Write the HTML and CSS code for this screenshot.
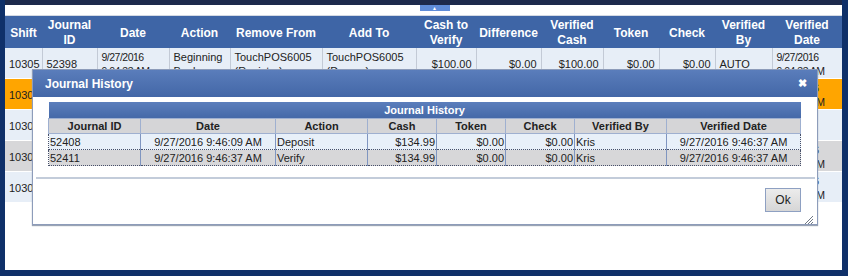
FILE: index.html
```html
<!DOCTYPE html>
<html lang="en">
<head>
  <meta charset="UTF-8">
  <title>Journal Verification</title>
  <link rel="stylesheet" href="styles.css">
</head>
<body>
  <div class="screen">
    <div class="topbar"></div>
    <div class="content">
      <div class="tabstrip"><span class="tab">&#9650;</span></div>
      <table class="grid">
        <colgroup>
          <col style="width:37px"><col style="width:55px"><col style="width:72px"><col style="width:61px">
          <col style="width:92px"><col style="width:94px"><col style="width:60px"><col style="width:65px">
          <col style="width:62px"><col style="width:56px"><col style="width:56px"><col style="width:57px">
          <col style="width:70px">
        </colgroup>
        <thead>
          <tr>
            <th>Shift</th>
            <th>Journal<br>ID</th>
            <th>Date</th>
            <th>Action</th>
            <th>Remove From</th>
            <th>Add To</th>
            <th>Cash to<br>Verify</th>
            <th>Difference</th>
            <th>Verified<br>Cash</th>
            <th>Token</th>
            <th>Check</th>
            <th>Verified<br>By</th>
            <th>Verified<br>Date</th>
          </tr>
        </thead>
        <tbody>
          <tr class="row-light">
            <td>10305</td><td class="left">52398</td><td class="left date">9/27/2016<br>9:04:33 AM</td>
            <td class="left">Beginning<br>Bank</td><td class="left">TouchPOS6005<br>(Register)</td><td class="left">TouchPOS6005<br>(Drawer)</td>
            <td class="num">$100.00</td><td class="num">$0.00</td><td class="num">$100.00</td>
            <td class="num">$0.00</td><td class="num">$0.00</td><td class="left">AUTO</td><td class="left date">9/27/2016<br>9:04:33 AM</td>
          </tr>
          <tr class="row-selected">
            <td>10305</td><td></td><td></td><td></td><td></td><td></td><td></td>
            <td></td><td></td><td></td><td></td><td></td><td class="left date">9/27/2016<br>9:46:37 AM</td>
          </tr>
          <tr class="row-light">
            <td>10305</td><td></td><td></td><td></td><td></td><td></td><td></td>
            <td></td><td></td><td></td><td></td><td></td><td class="left date"></td>
          </tr>
          <tr class="row-gray">
            <td>10305</td><td></td><td></td><td></td><td></td><td></td><td></td>
            <td></td><td></td><td></td><td></td><td></td><td class="left date">9/27/2016<br>9:46:37 AM</td>
          </tr>
          <tr class="row-light">
            <td>10305</td><td></td><td></td><td></td><td></td><td></td><td></td>
            <td></td><td></td><td></td><td></td><td></td><td class="left date">9/27/2016<br>9:46:37 AM</td>
          </tr>
        </tbody>
      </table>
    </div>

    <div class="dialog">
      <div class="dialog-title">
        <span>Journal History</span>
        <span class="dialog-close">&#10006;</span>
      </div>
      <div class="dialog-body">
        <table class="history">
          <colgroup>
            <col style="width:92px"><col style="width:135px"><col style="width:92px"><col style="width:69px">
            <col style="width:69px"><col style="width:69px"><col style="width:92px"><col style="width:134px">
          </colgroup>
          <thead>
            <tr><th colspan="8" class="history-caption">Journal History</th></tr>
            <tr class="history-head">
              <th>Journal ID</th><th>Date</th><th>Action</th><th>Cash</th>
              <th>Token</th><th>Check</th><th>Verified By</th><th>Verified Date</th>
            </tr>
          </thead>
          <tbody>
            <tr class="h-light">
              <td>52408</td><td class="center">9/27/2016 9:46:09 AM</td><td>Deposit</td><td class="num">$134.99</td>
              <td class="num">$0.00</td><td class="num">$0.00</td><td>Kris</td><td class="center">9/27/2016 9:46:37 AM</td>
            </tr>
            <tr class="h-gray">
              <td>52411</td><td class="center">9/27/2016 9:46:37 AM</td><td>Verify</td><td class="num">$134.99</td>
              <td class="num">$0.00</td><td class="num">$0.00</td><td>Kris</td><td class="center">9/27/2016 9:46:37 AM</td>
            </tr>
          </tbody>
        </table>
        <div class="dialog-sep"></div>
        <div class="dialog-buttons">
          <button class="btn-ok">Ok</button>
        </div>
        <svg class="grip" width="10" height="10" viewBox="0 0 10 10">
          <path d="M9 1 L1 9 M9 4 L4 9 M9 7 L7 9" stroke="#6f7784" stroke-width="1"/>
        </svg>
      </div>
    </div>
  </div>
</body>
</html>
```

FILE: styles.css
```css
body {
  margin: 0;
  font-family: "Liberation Sans", Arial, sans-serif;
  background: #ffffff;
}
.screen {
  position: relative;
  width: 848px;
  height: 276px;
  box-sizing: border-box;
  border-left: 5px solid #0f3069;
  border-right: 6px solid #0f3069;
  border-bottom: 6px solid #0f3069;
  background: #ffffff;
  overflow: hidden;
}
.topbar {
  height: 5px;
  background: #1d2a4c;
}
.tabstrip {
  height: 10px;
  border-bottom: 1px solid #d4dae4;
  display: flex;
  justify-content: center;
  padding-left: 22px;
}
.tab {
  width: 30px;
  height: 6px;
  background: #5f8cd8;
  color: #ffffff;
  font-size: 5px;
  line-height: 6px;
  text-align: center;
}
.grid {
  width: 837px;
  table-layout: fixed;
  border-collapse: collapse;
  font-size: 11px;
  color: #222;
}
.grid th {
  height: 30px;
  padding: 2px 0 0;
  background: #3e65a6;
  color: #ffffff;
  font-size: 12px;
  line-height: 15px;
  font-weight: bold;
  text-align: center;
}
.grid td {
  height: 28px;
  padding: 2px 4px 0;
  line-height: 14px;
  border-right: 1px solid #c3cad6;
  border-bottom: 1px solid #ffffff;
  text-align: center;
  white-space: nowrap;
  overflow: hidden;
}
.grid td.left {
  text-align: left;
}
.grid td.num {
  text-align: right;
}
.grid td.date {
  font-size: 10.5px;
  letter-spacing: -0.5px;
}
.row-light td {
  background: #e7eef7;
}
.row-selected td {
  background: #ffa500;
}
.row-gray td {
  background: #d7d7d9;
}

.dialog {
  position: absolute;
  left: 27px;
  top: 69px;
  width: 786px;
  height: 156px;
  box-sizing: border-box;
  background: #ffffff;
  border: 1px solid #8d9cba;
  box-shadow: 0 1px 1px #9aa4b4;
}
.dialog-title {
  height: 27px;
  display: flex;
  align-items: center;
  justify-content: space-between;
  padding: 0 10px 0 12px;
  background: linear-gradient(#5a7dbb, #4367a7);
  color: #ffffff;
  font-size: 12px;
  font-weight: bold;
}
.dialog-close {
  font-size: 11px;
}
.dialog-body {
  position: relative;
  padding: 5px 0 0 15px;
}
.history {
  width: 752px;
  table-layout: fixed;
  border-collapse: collapse;
  font-size: 11px;
  color: #222;
}
.history-caption {
  height: 16px;
  padding: 0;
  background: linear-gradient(#5b7ebc, #4569a8);
  color: #ffffff;
  font-size: 11px;
  font-weight: bold;
}
.history-head th {
  height: 14px;
  padding: 0;
  background: #d5d5d7;
  border: 1px solid #9fb0d0;
  font-size: 11px;
  font-weight: bold;
  color: #222;
}
.history td {
  height: 15px;
  padding: 0 1px;
  border: 1px dotted #47506a;
  border-left: 1px solid #7f95c0;
  border-right: 1px solid #7f95c0;
  white-space: nowrap;
}
.history td:first-child {
  border-left: 1px dotted #47506a;
}
.history td:last-child {
  border-right: 1px dotted #47506a;
}
.history td.num {
  text-align: right;
}
.history td.center {
  text-align: center;
}
.h-light td {
  background: #e8f0f9;
}
.h-gray td {
  background: #d7d7d9;
}
.dialog-sep {
  height: 2px;
  margin: 11px 2px 0 -12px;
  background: #c3ccda;
}
.dialog-buttons {
  display: flex;
  justify-content: flex-end;
  padding: 9px 16px 0 0;
}
.btn-ok {
  width: 36px;
  height: 24px;
  padding: 0;
  border: 1px solid #8ea0c2;
  background: linear-gradient(#ececec, #d6d6d6);
  font-family: "Liberation Sans", Arial, sans-serif;
  font-size: 12px;
  color: #222;
}
.grip {
  position: absolute;
  right: 3px;
  bottom: -13px;
}
```
